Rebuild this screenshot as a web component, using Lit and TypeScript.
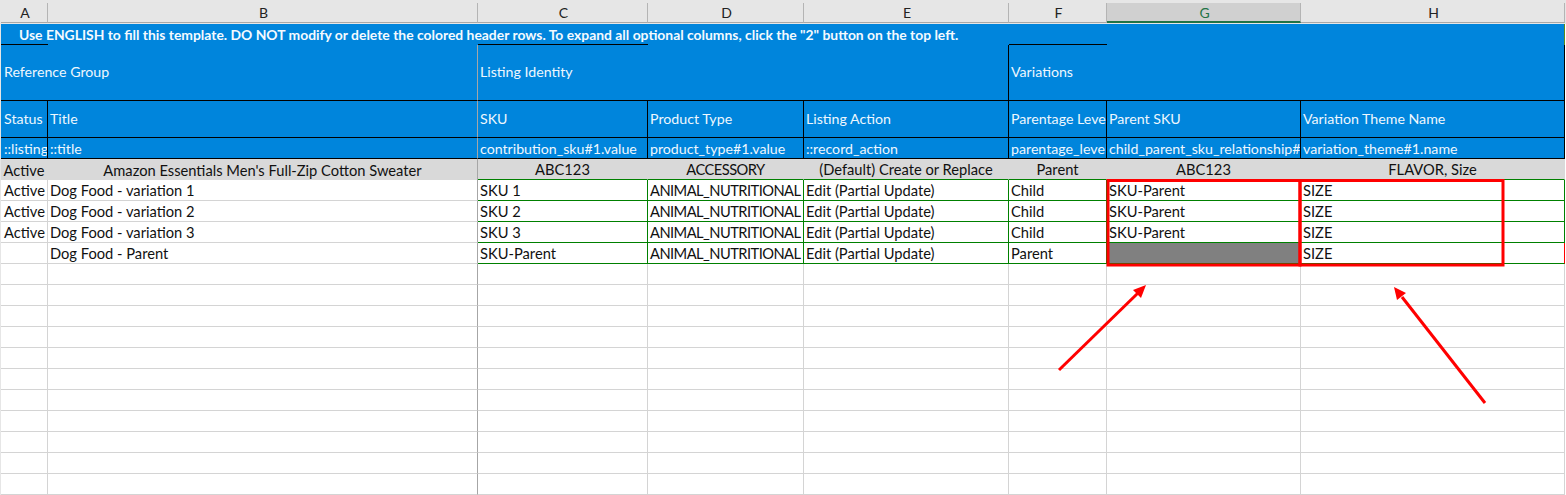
import { LitElement, html, css } from 'lit';
import { customElement } from 'lit/decorators.js';

const COLUMNS = ['A', 'B', 'C', 'D', 'E', 'F', 'G', 'H'];

const LABELS = ['Status', 'Title', 'SKU', 'Product Type', 'Listing Action', 'Parentage Level', 'Parent SKU', 'Variation Theme Name'];

const KEYS = [
  '::listing_status',
  '::title',
  'contribution_sku#1.value',
  'product_type#1.value',
  '::record_action',
  'parentage_level#1.value',
  'child_parent_sku_relationship#1.parent_sku',
  'variation_theme#1.name',
];

const EXAMPLE = ['Active', "Amazon Essentials Men's Full-Zip Cotton Sweater", 'ABC123', 'ACCESSORY', '(Default) Create or Replace', 'Parent', 'ABC123', 'FLAVOR, Size'];

const ROWS = [
  ['Active', 'Dog Food - variation 1', 'SKU 1', 'ANIMAL_NUTRITIONAL', 'Edit (Partial Update)', 'Child', 'SKU-Parent', 'SIZE'],
  ['Active', 'Dog Food - variation 2', 'SKU 2', 'ANIMAL_NUTRITIONAL', 'Edit (Partial Update)', 'Child', 'SKU-Parent', 'SIZE'],
  ['Active', 'Dog Food - variation 3', 'SKU 3', 'ANIMAL_NUTRITIONAL', 'Edit (Partial Update)', 'Child', 'SKU-Parent', 'SIZE'],
  ['', 'Dog Food - Parent', 'SKU-Parent', 'ANIMAL_NUTRITIONAL', 'Edit (Partial Update)', 'Parent', '', 'SIZE'],
];

const EMPTY_ROWS = 11;

@customElement('app-root')
export class AppRoot extends LitElement {
  static styles = css`
    :host {
      display: block;
      position: relative;
      height: 495px;
      overflow: hidden;
      background: #e6e6e6;
      font-family: Lato, 'Liberation Sans', sans-serif;
      font-size: 14.2px;
      color: #111;
    }
    .sheet {
      display: grid;
      grid-template-columns: 47px 430px 170px 156px 205px 98px 194px 264px 1px;
      grid-template-rows: 24px 21px 56px 37px 21px 21px repeat(15, 21px);
      padding-left: 1px;
    }
    .cell {
      box-sizing: border-box;
      display: flex;
      align-items: center;
      min-width: 0;
      padding: 0 0 0 2px;
      overflow: hidden;
      white-space: nowrap;
    }
    .first {
      padding-left: 3px;
    }
    .head {
      justify-content: center;
      height: 20px;
      margin-top: 3px;
      border-right: 1px solid #b4b4b4;
      border-bottom: 1px solid #a8a8a8;
      color: #222;
      font-size: 14px;
    }
    .head.selected {
      border-bottom: 2px solid #217346;
      background: #d0d0d0;
      color: #217346;
    }
    .headEnd {
      height: 24px;
      border-bottom: 1px solid #a8a8a8;
    }
    .banner {
      grid-row: 2;
      grid-column: 1 / span 8;
      padding-left: 18px;
      background: #0085dc;
      color: #f4faff;
      font-size: 13.9px;
      font-weight: 700;
      border-right: 1px solid #5a8a1e;
    }
    .rule {
      grid-row: 2;
      align-self: end;
      height: 1px;
      background: #000;
    }
    .rule.a { grid-column: 1; }
    .rule.c { grid-column: 3; }
    .rule.f { grid-column: 6; }
    .blue {
      background: #0085dc;
      color: #eef7fe;
      border-right: 1px solid #000;
      border-bottom: 1px solid #000;
    }
    .lifted {
      padding-bottom: 2px;
    }
    .frozen {
      border-right-color: #a6a6a6;
    }
    .group {
      grid-row: 3;
    }
    .group.ref { grid-column: 1 / span 2; }
    .group.identity { grid-column: 3 / span 3; }
    .group.variations { grid-column: 6 / span 3; }
    .example {
      justify-content: center;
      padding: 0;
      font-size: 14.7px;
      background: #d9d9d9;
      border-right: 1px solid #d9d9d9;
    }
    .data {
      font-size: 14.7px;
      background: #fff;
      border-right: 1px solid #d4d4d4;
      border-bottom: 1px solid #d4d4d4;
    }
    .caps {
      letter-spacing: -0.55px;
    }
    .green {
      border-right-color: #008000;
      border-bottom-color: #008000;
    }
    .example.green {
      border-right-color: #d9d9d9;
      border-bottom: 1px solid #008000;
    }
    .example.frozen,
    .data.frozen {
      border-right-color: #a6a6a6;
    }
    .missing {
      background: #808080;
    }
    .invalid {
      border-right-color: #f00;
    }
    .filler {
      background: #fff;
    }
    .marks {
      position: absolute;
      top: 0;
      left: 0;
      pointer-events: none;
    }
  `;

  // only the first four data rows carry the validation colours
  private dataCell(text: string, col: number, row: number) {
    const classes = ['cell', 'data'];
    if (col === 0) classes.push('first');
    if (col === 1) classes.push('frozen');
    if (col === 3) classes.push('caps');
    if (col > 1 && row >= 0) classes.push('green');
    if (col === 6 && row === 3) classes.push('missing');
    if (col === 7 && row === 3) classes.push('invalid');
    return html`<div class=${classes.join(' ')}>${text}</div>`;
  }

  private blueCell(text: string, col: number, lifted: boolean) {
    const classes = ['cell', 'blue'];
    if (col === 0) classes.push('first');
    if (col === 1) classes.push('frozen');
    if (lifted) classes.push('lifted');
    return html`<div class=${classes.join(' ')}>${text}</div>`;
  }

  render() {
    return html`
      <div class="sheet">
        ${COLUMNS.map(
          (c) => html`<div class="cell head ${c === 'G' ? 'selected' : ''}">${c}</div>`
        )}
        <div class="headEnd"></div>

        <div class="cell banner">
          Use ENGLISH to fill this template. DO NOT modify or delete the colored header rows. To expand all optional columns, click the "2" button on the top left.
        </div>
        <div class="rule a"></div>
        <div class="rule c"></div>
        <div class="rule f"></div>
        <div class="filler"></div>

        <div class="cell blue first lifted frozen group ref">Reference Group</div>
        <div class="cell blue lifted group identity">Listing Identity</div>
        <div class="cell blue lifted group variations">Variations</div>
        <div class="filler"></div>

        ${LABELS.map((t, i) => this.blueCell(t, i, true))}
        <div class="filler"></div>
        ${KEYS.map((t, i) => this.blueCell(t, i, false))}
        <div class="filler"></div>
        ${EXAMPLE.map(
          (t, i) => html`<div class="cell example ${i === 1 ? 'frozen' : ''} ${i === 3 ? 'caps' : ''} ${i > 1 ? 'green' : ''}">${t}</div>`
        )}
        <div class="filler"></div>

        ${ROWS.map(
          (r, row) => html`${r.map((t, col) => this.dataCell(t, col, row))}<div class="filler"></div>`
        )}
        ${Array.from({ length: EMPTY_ROWS }).map(
          () => html`${COLUMNS.map((_, col) => this.dataCell('', col, -1))}<div class="filler"></div>`
        )}
      </div>

      <svg class="marks" width="1566" height="495" viewBox="0 0 1566 495">
        <g fill="none" stroke="#f00" stroke-width="3">
          <rect x="1108" y="180.5" width="192" height="84.5"></rect>
          <rect x="1300" y="180.5" width="203" height="84.5"></rect>
          <line x1="1059" y1="370" x2="1138" y2="293"></line>
          <line x1="1485" y1="403" x2="1402" y2="297"></line>
        </g>
        <polygon fill="#f00" points="1146,285 1141,298 1133,290"></polygon>
        <polygon fill="#f00" points="1394,287 1406,293 1397,300"></polygon>
      </svg>
    `;
  }
}
